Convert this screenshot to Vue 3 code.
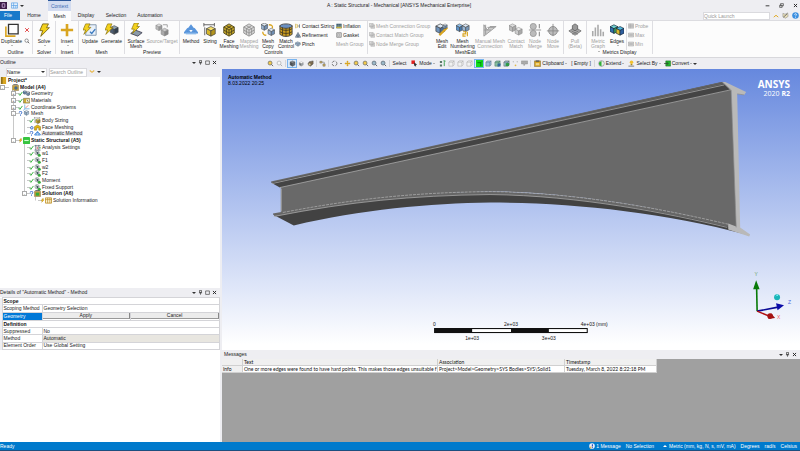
<template>
  <div class="app">
    <header class="titlebar">
      <div class="quick">
        <Icon name="logo" :size="7" />
        <button class="plain" aria-label="Layout"><Icon name="layout" :size="7" /></button>
        <button class="plain caret-btn" aria-label="Customize"><i class="caret"></i></button>
      </div>
      <div class="context">Context</div>
      <h1 class="title">A : Static Structural - Mechanical [ANSYS Mechanical Enterprise]</h1>
      <div class="window-buttons">
        <button class="plain" aria-label="Minimize"><Icon name="min" :size="5" /></button>
        <button class="plain" aria-label="Restore"><Icon name="restore" :size="5" /></button>
        <button class="plain" aria-label="Close"><Icon name="close" :size="5" /></button>
      </div>
    </header>

    <nav class="tabs">
      <button
        v-for="tab in tabs"
        :key="tab"
        class="tab"
        :class="['tab-' + tab.toLowerCase(), { active: tab === activeTab }]"
        @click="activeTab = tab"
      >{{ tab }}</button>
      <div class="launch">
        <input type="text" placeholder="Quick Launch" aria-label="Quick Launch">
        <button class="plain" aria-label="Collapse"><Icon name="chevUp" :size="6" /></button>
        <button class="plain" aria-label="Options"><Icon name="wrench" :size="7" /></button>
        <button class="plain" aria-label="Help"><Icon name="help" :size="7" /></button>
      </div>
    </nav>

    <section class="ribbon">
      <div v-for="group in groups" :key="group.id" class="group" :class="'group-' + group.id">
        <div class="group-items">
          <template v-for="item in group.items" :key="item.key">
            <div v-if="item.small" class="stack" :class="item.cls">
              <button v-for="s in item.small" :key="s.icon + s.text" class="small" :class="{ off: s.off }" :aria-label="s.text || s.icon">
                <Icon v-if="s.icon" :name="s.icon" :size="6" />
                <span v-if="s.text">{{ s.text }}</span>
              </button>
            </div>
            <button v-else class="big" :class="[item.cls, { off: item.off }]">
              <Icon :name="item.icon" :size="14" />
              <span>{{ item.text }}<i v-if="item.inlineCaret" class="caret tiny"></i></span>
              <i v-if="item.caret" class="caret tiny"></i>
            </button>
          </template>
        </div>
        <div class="group-label">{{ group.label }}</div>
      </div>
    </section>

    <main class="work">
      <aside class="left">
        <div class="panel-head">
          <span>Outline</span><i class="dots"></i><PanelButtons />
        </div>
        <div class="filter">
          <select aria-label="Filter by"><option>Name</option></select>
          <i class="caret select-caret"></i>
          <input type="text" placeholder="Search Outline" aria-label="Search Outline">
          <button class="plain" aria-label="Expand"><Icon name="chevDown" :size="6" /></button>
          <i class="caret"></i>
        </div>
        <div class="outline">
          <ul class="tree">
            <li v-for="node in tree" :key="node.text" :class="{ bold: node.bold }">
              <template v-if="node.depth">
                <i v-for="n in node.depth - 1" :key="n" class="indent" :class="{ line: node.open === n }"></i>
                <i class="knot" :class="{ line: node.depth > 1, last: node.last }">
                  <b v-if="node.box">{{ node.box }}</b>
                </i>
                <i class="state"><Icon v-if="node.state" :name="node.state" :size="5" /></i>
              </template>
              <Icon :name="node.icon" :size="7" />
              <span class="node-text" :class="{ selected: node.selected }">{{ node.text }}</span>
            </li>
          </ul>
        </div>
        <div class="panel-head">
          <span>Details of "Automatic Method" - Method</span><i class="dots"></i><PanelButtons />
        </div>
        <div class="details">
          <table>
            <colgroup><col class="c-gutter"><col class="c-name"><col><col></colgroup>
            <tbody>
              <tr class="section"><td class="gutter"></td><th colspan="3">Scope</th></tr>
              <tr><td class="gutter"></td><th>Scoping Method</th><td colspan="2">Geometry Selection</td></tr>
              <tr class="picked">
                <td class="gutter"></td><th>Geometry</th>
                <td><button>Apply</button></td><td><button>Cancel</button></td>
              </tr>
              <tr class="section"><td class="gutter"></td><th colspan="3">Definition</th></tr>
              <tr><td class="gutter"></td><th>Suppressed</th><td colspan="2">No</td></tr>
              <tr class="shade"><td class="gutter"></td><th>Method</th><td colspan="2">Automatic</td></tr>
              <tr><td class="gutter"></td><th>Element Order</th><td colspan="2">Use Global Setting</td></tr>
            </tbody>
          </table>
        </div>
      </aside>

      <div class="right">
        <div class="toolbar">
          <i class="grip"></i>
          <template v-for="(t, i) in tools" :key="i">
            <i v-if="t === '|'" class="sep"></i>
            <i v-else-if="t === 'v'" class="caret light"></i>
            <button v-else class="tool" :class="[t.cls, { on: t.on }]" :aria-label="t.text || t.icon">
              <Icon v-if="t.icon" :name="t.icon" :size="7" />
              <span v-if="t.text">{{ t.text }}</span>
              <i v-if="t.caret" class="caret tiny"></i>
            </button>
          </template>
          <i class="caret"></i>
        </div>

        <div class="viewport">
          <div class="caption">
            <strong>Automatic Method</strong>
            <span>8.03.2022 20:25</span>
          </div>
          <div class="brand"><strong>ANSYS</strong><span>2020 <b>R2</b></span></div>
          <svg class="scene" viewBox="222 68 578 282">
            <!-- web plate -->
            <path fill="#696969" d="M280 185L732 88L739 228C690 212 580 192 500 191C430 191 350 201 280 212Z" />
            <!-- upper flange -->
            <path fill="#444" d="M270 182L723 81L732 89L279 187Z" />
            <path fill="#686868" d="M270 181L722 81L725 83L272 183Z" />
            <path class="edge" d="M271 183L725 84M279 187L731 89" />
            <path stroke="#555" stroke-width=".8" fill="none" d="M272 182L724 82" />
            <path class="edge" d="M280.500 188V211" />
            <!-- lower flange -->
            <path fill="#424242" d="M272 214C350 200 410 193 490 192C580 193 670 211 730 224L747 234C660 211 570 202 490 202C430 203 360 209 293 225Z" />
            <path fill="#666" d="M272 213C350 199 410 192 490 191C580 192 670 209 732 224L736 228C670 212 580 195 490 194C410 195 350 201 274 216Z" />
            <path class="edge" d="M273 216C350 201 410 195 490 194C580 195 670 213 728 227" />
            <path class="edge" stroke-dasharray="3 1" d="M282 212C350 199 410 192 490 191C580 192 670 210 730 224" />
            <!-- end section -->
            <path fill="#b9b9b9" d="M723 81L726 81L747 91L745 94L738 93L741 227L751 234L750 236L729 229V223L737 226L732 90L729 87Z" />
            <path fill="none" stroke="#8b8b8b" stroke-width=".7" d="M723 81L732 89L737 227M738 93L745 94" />

            <g class="ruler">
              <rect x="434.500" y="328.500" width="153" height="4" fill="#fff" stroke="#000" />
              <path d="M434 328h38v5h-38zM511 328h38v5h-38z" />
              <text x="434" y="326" text-anchor="middle">0</text>
              <text x="511" y="326" text-anchor="middle">2e+03</text>
              <text x="581" y="326">4e+03 (mm)</text>
              <text x="472" y="340" text-anchor="middle">1e+03</text>
              <text x="549" y="340" text-anchor="middle">3e+03</text>
            </g>

            <g class="triad">
              <circle cx="778" cy="297" r="3" fill="#1ab5b8" />
              <path d="M777 296a2 2 0 0 1 2-1" stroke="#8ff" fill="none" />
              <path d="M758 311L757.500 287" stroke="#087a08" stroke-width="1.600" />
              <path d="M757 280L760.500 289H754Z" fill="#087a08" />
              <path d="M758 311L779 307" stroke="#0a0a96" stroke-width="1.600" />
              <path d="M785 305L777 303L778.500 310Z" fill="#0a0aa8" />
              <path d="M758 311L770 316" stroke="#b01010" stroke-width="1.600" />
              <path d="M776 318L769 319L772 313Z" fill="#a01010" /><circle cx="771" cy="316" r="2.800" fill="#a51212" />
              <text x="757" y="276" fill="#6aa56a" text-anchor="middle">Y</text>
              <text x="789" y="304" fill="#4a6ae0">Z</text>
              <text x="778" y="319" fill="#f06060">X</text>
            </g>
          </svg>
        </div>

        <div class="messages">
          <div class="panel-head">
            <span>Messages</span><i class="dots"></i><PanelButtons short />
          </div>
          <table>
            <thead>
              <tr><th class="c-kind"></th><th class="c-text">Text</th><th class="c-assoc">Association</th><th class="c-time">Timestamp</th></tr>
            </thead>
            <tbody>
              <tr>
                <td class="kind">Info</td>
                <td>One or more edges were found to have hard points. This makes those edges unsuitable f</td>
                <td>Project&gt;Model&gt;Geometry&gt;SYS Bodies&gt;SYS\Solid1</td>
                <td>Tuesday, March 8, 2022 8:22:18 PM</td>
              </tr>
            </tbody>
          </table>
        </div>
      </div>
    </main>

    <footer class="status">
      <span class="ready">Ready</span>
      <span class="msg"><Icon name="bubble" :size="6" />1 Message</span>
      <span>No Selection</span>
      <span class="units"><i class="caret up"></i>Metric (mm, kg, N, s, mV, mA)</span>
      <span>Degrees</span>
      <span>rad/s</span>
      <span>Celsius</span>
    </footer>
  </div>
</template>

<script setup>
import { ref, h } from 'vue'

// small shapes shared by several icons, drawn on a 16x16 grid
const bolt = (x = 0, y = 0, c = '#f4d21c') =>
  `<path transform="translate(${x} ${y})" d="M5 0h5L8 4h3L3 12l2-5H2z" fill="${c}" stroke="#8a7410" stroke-width=".8"/>`
const cube = (x, y, s, a, b, c, st = '#444') =>
  `<g transform="translate(${x} ${y}) scale(${s})" stroke="${st}" stroke-width=".8"><path d="M5 0l5 2.500-5 2.500-5-2.500z" fill="${a}"/><path d="M0 2.500l5 2.500v6l-5-2.500z" fill="${b}"/><path d="M10 2.500l-5 2.500v6l5-2.500z" fill="${c}"/></g>`
const lens = (c, fill) =>
  `<circle cx="7" cy="7" r="4.500" fill="${fill}" stroke="${c}" stroke-width="1.600"/><path d="M10 10l4 4" stroke="${c}" stroke-width="2.200"/>`
const hexMesh = (fill, st) =>
  `<path d="M8 1l6 3.500v7L8 15l-6-3.500v-7z" fill="${fill}" stroke="${st}"/><path d="M2 4.500l6 3.500 6-3.500M8 8v7M2 8l6 3.500L14 8M5 3l6 3.500v7M11 3L5 6.500v7" stroke="${st}" fill="none"/>`
const box = (st, fill = '#f2f2f2') =>
  `<path d="M2 5l3-3h9v9l-3 3H2z" fill="${fill}" stroke="${st}"/><path d="M2 5h9v9M11 5l3-3" fill="none" stroke="${st}"/>`
const load = `<circle cx="7" cy="6" r="5" fill="#d8e4d8" stroke="#667"/><path d="M5 3l6 3-4 5z" fill="#3a4a5a"/><circle cx="12" cy="12" r="3.500" fill="#37a93c"/>`

const icons = {
  logo: '<rect width="16" height="16" fill="#3b1b46"/><path d="M5 4h6v8H5z" fill="none" stroke="#c9a9d8" stroke-width="2"/>',
  layout: '<path d="M1 2h14v12H1zM1 8h14M6 2v12M11 8v6" fill="#e5f0fc" stroke="#5aa0e6" stroke-width="1.600"/>',
  min: '<path d="M2 9h12" stroke="#333" stroke-width="3"/>',
  restore: '<path d="M5 2h9v7h-9zM2 7h8v7H2z" fill="#eee" stroke="#333" stroke-width="2"/>',
  close: '<path d="M3 3l10 10M13 3L3 13" stroke="#222" stroke-width="3"/>',
  chevUp: '<path d="M2 11l6-5 6 5" stroke="#e0a81c" stroke-width="2.500" fill="none"/>',
  chevDown: '<path d="M2 4l6 5 6-5" stroke="#e8b84c" stroke-width="3" fill="none"/>',
  wrench: '<path d="M2 3l5 2 6-3 1 8-6 4-6-3z" fill="#e9dfb8" stroke="#777"/><path d="M3 12l9-8" stroke="#666" stroke-width="2"/>',
  help: '<circle cx="8" cy="8" r="7.500" fill="#3b8fe0"/><path d="M6 6q0-2 2-2t2 2-2 3M8 11v2" stroke="#fff" stroke-width="1.800" fill="none"/>',
  pin: '<path d="M5 1h6v7H5zM3 9h10M8 9v6" fill="none" stroke="#333" stroke-width="2.200"/>',
  square: '<path d="M2 3h12v11H2z" fill="none" stroke="#333" stroke-width="2"/>',
  duplicate: '<path d="M1 4v11h11" fill="none" stroke="#d9a520" stroke-width="1.800"/><path d="M4 1.500h11v11H4z" fill="#fdfdfd" stroke="#333" stroke-width="1.500"/>',
  x: '<path d="M3 3l10 10M13 3L3 13" stroke="#e04040" stroke-width="2.500"/>',
  mag: lens('#555', '#fff'),
  solve: '<g transform="translate(1 1) scale(1.100)"><path d="M5 0h6L9 4h3L3 13l2-6H2z" fill="#f4d21c" stroke="#776412" stroke-width=".9"/></g>',
  insert: '<path d="M6.500 1h3v5.500H15v3H9.500V15h-3V9.500H1v-3h5.500z" fill="#d9a520"/>',
  update: '<path d="M4 2h11v12H3z" fill="#e9f1fa" stroke="#7890a8"/><path d="M8 10l2 2 4-5" stroke="#3a7ac0" stroke-width="1.500" fill="none"/>' + bolt(-2, 1),
  generate: cube(6, 3, 0.9, '#8fa5b8', '#4c5c70', '#31404f') + bolt(-2, 1),
  surface: '<path d="M2 12l5-4 8 3-5 4z" fill="#8a9aa8" stroke="#445"/>' + bolt(1, 0),
  source: cube(1, 1, 0.7, '#ddd', '#bbb', '#999', '#888') + cube(7, 6, 0.8, '#ccc', '#aaa', '#888', '#888') + '<path d="M9 2h5v3" stroke="#999" fill="none"/>',
  method: '<path d="M1 11l3-4 3 4zM5 7l3-4 3 4zM9 11l3-4 3 4z" fill="#4f8fd8" stroke="#5a96dc" stroke-width="2"/><path d="M2 12h12" stroke="#8ab8ea" stroke-width="2"/>',
  sizing: cube(4, 4, 1, '#f7e06a', '#d8b82c', '#b3941c') + '<path d="M1 2h12M1 0v4M13 0v4M2 5v9" stroke="#555" fill="none"/>',
  face: hexMesh('#c8a92a', '#4c431a'),
  mapped: hexMesh('#d8d8d8', '#909090'),
  copy: cube(0, 0, 0.75, '#dfe9f4', '#9cb6d3', '#6f8fb4') + cube(8, 6, 0.75, '#dfe9f4', '#9cb6d3', '#6f8fb4') + '<path d="M9 2q5 0 4 4M2 10q0 4 4 4" stroke="#d9a520" stroke-width="1.500" fill="none"/>',
  match: '<path d="M1 3v10q7 5 14 0V3z" fill="#c99a1c" stroke="#4a4a4a"/><ellipse cx="8" cy="3.500" rx="7" ry="2.500" fill="#6a8fc0" stroke="#444"/><path d="M1 6.500q7 4 14 0M1 10q7 4 14 0M4 5v9M8 6v9M12 5v9" stroke="#4a4020" fill="none"/>',
  contact: '<path d="M2 2v12M5 3q6 5 0 10" stroke="#c8a020" stroke-width="2" fill="none"/><path d="M13 2q-7 6 0 12z" fill="#6c7c90"/>',
  refinement: '<path d="M8 1l7 13H1zM4.500 8h7L8 14z" fill="#9fb4cc" stroke="#345" stroke-width="1.300"/>',
  pinch: '<path d="M1 5l6-3 7 3v5l-6 4-7-4z" fill="#9fb4cc" stroke="#456"/><path d="M1 5l7 3 6-3M8 8v6" stroke="#456" fill="none"/>',
  inflation: '<path d="M1 2h14v12H1z" fill="#33506c"/><path d="M1 10h14v4H1z" fill="#c8b030"/><path d="M1 6h14M1 9h14M6 2v12M11 2v12" stroke="#b9d0b0" stroke-width=".8"/>',
  gasket: '<path d="M2 2h12v12H2z" fill="#eee" stroke="#555" stroke-width="1.600"/><path d="M5 5h5v6H5z" fill="none" stroke="#555"/>',
  group: '<path d="M1 1h10v9H1zM5 5h10v9H5z" fill="#e2e2e2" stroke="#999" stroke-width="1.300"/><path d="M7 8h6M7 11h6" stroke="#999"/>',
  edit: cube(1, 1, 1, '#dce8f4', '#6f93bb', '#4a6b92') + '<path d="M5 14l9-9" stroke="#d9a520" stroke-width="2.500"/>' + cube(9, 1, 0.5, '#dce8f4', '#8facc9', '#6688aa'),
  numbering: cube(0, 1, 0.8, '#8fc1ef', '#5b91c6', '#4777a8') + cube(7, 1, 0.8, '#dce8f4', '#9ab7d4', '#7797b7') + '<path d="M8 10h3v2.500H8V15h3M13 10v5" stroke="#d9a520" stroke-width="1.300" fill="none"/>',
  manual: '<path d="M1 2v13L15 4H8L5 8z" fill="#ccc" stroke="#999"/><path d="M3 2v11M1 8h8M5 5h8" stroke="#999"/>',
  cmatch: cube(0, 1, 0.8, '#ddd', '#bbb', '#aaa', '#888') + cube(7, 5, 0.8, '#eee', '#ccc', '#aaa', '#888'),
  merge: '<circle cx="6" cy="4" r="3.500" fill="#bbb" stroke="#999"/><circle cx="6" cy="12" r="3.500" fill="#bbb" stroke="#999"/><path d="M1 8h14M13 1v5M13 15v-5" stroke="#999" stroke-width="1.400"/>',
  move: '<circle cx="8" cy="9" r="5" fill="#bdbdbd" stroke="#888"/><path d="M8 1v14M1 9h14" stroke="#888"/>',
  pull: '<path d="M8 5l7 4-7 5-7-5z" fill="#aaa" stroke="#777"/><path d="M5 7V3l3-2 3 2v4l-3 2z" fill="#999" stroke="#666"/><path d="M4 9l7 4M12 9l-7 4" stroke="#777"/>',
  metric: '<path d="M2 15V9M5 15V5M8 15V2M11 15V7M14 15V10" stroke="#aaa" stroke-width="1.800"/>',
  edges: cube(0, 2, 0.9, '#6fd0d0', '#2f6fae', '#3fae5f', '#123') + cube(7, 4, 0.9, '#4fb8e0', '#d8b82c', '#2f5f9e', '#123'),
  probe: '<path d="M1 2h14v12H1z" fill="#ccc" stroke="#999"/><path d="M1 6h14M1 10h14M6 2v12" stroke="#999"/>',
  max: '<path d="M1 3h14v10H1z" fill="#ddd" stroke="#999" stroke-width="1.500"/><path d="M3 8h10" stroke="#888" stroke-width="2"/>',
  check: '<path d="M2 9l4 5 8-11" stroke="#2fae36" stroke-width="3" fill="none"/>',
  query: '<path d="M4 5q0-4 4-4t4 4-4 5M8 12v3" stroke="#2c62c8" stroke-width="3" fill="none"/>',
  flash: bolt(2, 2, '#f4b81c'),
  ring: '<circle cx="9" cy="9" r="4" fill="none" stroke="#2c62c8" stroke-width="3"/>',
  project: '<path d="M2 0h12v16H2z" fill="#d8a520"/><path d="M2 0h4v16H2z" fill="#8f6f18"/>',
  model: '<path d="M1 3h14v12H1z" fill="#cda432" stroke="#765"/><circle cx="9" cy="9" r="4" fill="#456a90"/><path d="M3 1h10" stroke="#666" stroke-width="2"/>',
  geometry: cube(0, 1, 0.8, '#a8c4e4', '#4f7fb0', '#6c96c0') + cube(7, 3, 0.9, '#dfe9f4', '#8ba9c8', '#7390b0'),
  materials: '<path d="M1 3h14v11H1z" fill="#c9a834" stroke="#554"/><path d="M7 5h7v7H7z" fill="#f6efd0"/><path d="M9 6l3 5" stroke="#444" stroke-width="1.500"/>',
  coords: '<path d="M4 1v10h11M4 11l-3 4" stroke="#57a0d8" fill="none" stroke-width="1.600"/><path d="M6 9l6-6" stroke="#e06a6a" stroke-width="1.800"/>',
  mesh: cube(3, 1, 1, '#dbe7f3', '#8aa8c6', '#a8c0d8', '#456'),
  faceMesh: '<path d="M1 14V6l7-4 7 4v8h-4V9H6v5z" fill="#e2b414" stroke="#7a6410"/>',
  env: '<rect width="16" height="16" rx="1" fill="#37c43f"/><path d="M3 8h10" stroke="#d6ffd8" stroke-width="2.500"/>',
  settings: '<path d="M1 4h14M1 14h14M4 2v12M11 2v12" stroke="#456" stroke-width="1.500"/><path d="M6 6h3v6H6z" fill="#e08a8a"/><path d="M12 7h3v3h-3z" fill="#4ab04e"/>',
  load,
  solution: '<path d="M1 3h14v12H1z" fill="#c79c30" stroke="#765"/><path d="M4 6h8v7H4z" fill="#37a93c"/><path d="M3 1h10" stroke="#555" stroke-width="2"/>',
  info: '<path d="M1 2h14v12H1z" fill="#fff6d8" stroke="#b98a1c" stroke-width="1.800"/><path d="M1 6h14M6 2v12M11 2v12" stroke="#b98a1c" stroke-width="1.500"/>',
  zoomY: lens('#66686c', '#f2c94a'),
  zoomG: lens('#a8aaae', '#f6f6f6'),
  zoomB: lens('#5a6470', '#9ab8c8'),
  shaded: cube(2.5, 2, 1.1, '#8a8f94', '#4a5056', '#666c72'),
  flat: cube(3, 4, 0.9, '#fff', '#6c7278', '#9ca2a8', '#888'),
  shapes: '<path d="M2 9l3-5 9-2v7l-6 5z" fill="#7c6a50" stroke="#444"/><circle cx="6" cy="10" r="3" fill="#dcc890" stroke="#444"/>',
  nodes: '<path d="M2 3h5v4H2zM9 9h5v5H9z" fill="#d9b860" stroke="#555"/><path d="M7 5h5v4" stroke="#555" fill="none"/>',
  rotate: '<circle cx="8" cy="8" r="5.500" fill="none" stroke="#555" stroke-width="1.600" stroke-dasharray="6 2.600"/>',
  pan: '<path d="M8 1l3 4H9v2h2V5l4 3-4 3V9H9v2h2l-3 4-3-4h2V9H5v2L1 8l4-3v2h2V5H5z" fill="#d9a520"/>',
  cursor: '<path d="M1 1h8v8H1z" fill="#e02020"/><path d="M7 5l7 6-3 .5 1 3-2 .5-1-3-2 2z" fill="#333"/>',
  filter: '<path d="M2 2h5v5H2zM2 10h5v5H2z" fill="#5a7868"/><path d="M10 2h4l-2 4v8" stroke="#2f9a45" stroke-width="2" fill="none"/>',
  boxG: box('#9a9a9a'),
  boxOn: '<rect width="16" height="16" fill="#10dc1c"/><path d="M3 6h8v8M11 6l3-3" fill="none" stroke="#065f0a" stroke-width="1.500"/>',
  boxB: box('#556a80', '#9fc0dc'),
  boxN: box('#3f6a58', '#8ac0a0') + '<path d="M8 8h7v7H8z" fill="#346898"/>',
  boxM: box('#444', '#9cc4d4') + '<path d="M6 7h8v7H6z" fill="#2f9a45"/>',
  tri: '<circle cx="3" cy="4" r="1.500" fill="#bbb"/><circle cx="12" cy="4" r="1.500" fill="#bbb"/><circle cx="8" cy="12" r="2" fill="#e0b94a"/>',
  callout: '<path d="M1 2h14v7H9l-2 4-1-4H1z" fill="#aaa" stroke="#888"/>',
  clip: '<path d="M1 2h14v13H1z" fill="#d9a520" stroke="#6a5a2a"/><path d="M4 1h8v3H4z" fill="#555"/><path d="M4 7h8v5H4z" fill="#efd58a"/>',
  extend: '<circle cx="8" cy="8" r="6.500" fill="#e8efe8" stroke="#556"/><path d="M8 2v12a6 6 0 0 1-5-9z" fill="#2fae36"/>',
  bulb: '<circle cx="8" cy="5" r="4" fill="#f2c12e"/><path d="M6 9h4v3H6z" fill="#a88820"/><path d="M1 14h13" stroke="#555" stroke-width="1.600"/>',
  convert: '<path d="M4 2h11v12H4z" fill="#23b42c" stroke="#155c18"/><path d="M0 8h8M6 5l4 3-4 3" stroke="#333" stroke-width="1.500" fill="none"/>',
  bubble: '<circle cx="8" cy="8" r="7.500" fill="#e9eefc"/><path d="M1 13l5-6v8z" fill="#e8b84c"/><path d="M9 3v6M9 11v2" stroke="#1a3fae" stroke-width="2.800"/>'
}

const Icon = (props) =>
  h('svg', {
    class: 'icon',
    viewBox: '0 0 16 16',
    width: props.size,
    height: props.size,
    'aria-hidden': true,
    innerHTML: icons[props.name]
  })
Icon.props = ['name', 'size']

const PanelButtons = (props) =>
  h('span', { class: 'panel-buttons' }, [
    h('i', { class: 'caret' }),
    h(Icon, { name: 'pin', size: 5 }),
    props.short ? null : h(Icon, { name: 'square', size: 5 }),
    h(Icon, { name: 'close', size: 5 })
  ])
PanelButtons.props = { short: Boolean }

const tabs = ['File', 'Home', 'Mesh', 'Display', 'Selection', 'Automation']
const activeTab = ref('Mesh')

const groups = [
  {
    id: 'outline', label: 'Outline', items: [
      { key: 'dup', icon: 'duplicate', text: 'Duplicate', caret: true, cls: 'w23' },
      { key: 'dupx', cls: 'tall', small: [{ icon: 'x' }, { icon: 'mag' }] }
    ]
  },
  { id: 'solver', label: 'Solver', items: [{ key: 'solve', icon: 'solve', text: 'Solve', caret: true, cls: 'w20' }] },
  { id: 'insert', label: 'Insert', items: [{ key: 'insert', icon: 'insert', text: 'Insert', caret: true, cls: 'w20' }] },
  {
    id: 'mesh', label: 'Mesh', items: [
      { key: 'update', icon: 'update', text: 'Update', cls: 'w20' },
      { key: 'gen', icon: 'generate', text: 'Generate', cls: 'w23' }
    ]
  },
  {
    id: 'preview', label: 'Preview', items: [
      { key: 'surf', icon: 'surface', text: 'Surface Mesh', cls: 'w20' },
      { key: 'src', icon: 'source', text: 'Source/Target', off: true, cls: 'w32' }
    ]
  },
  {
    id: 'controls', label: 'Controls', items: [
      { key: 'method', icon: 'method', text: 'Method', cls: 'w20' },
      { key: 'sizing', icon: 'sizing', text: 'Sizing', cls: 'w18' },
      { key: 'face', icon: 'face', text: 'Face Meshing', cls: 'w20' },
      { key: 'mapped', icon: 'mapped', text: 'Mapped Meshing', off: true, cls: 'w20' },
      { key: 'copy', icon: 'copy', text: 'Mesh Copy', cls: 'w18' },
      { key: 'match', icon: 'match', text: 'Match Control', cls: 'w18' },
      {
        key: 'c1', cls: 'col41', small: [
          { icon: 'contact', text: 'Contact Sizing' },
          { icon: 'refinement', text: 'Refinement' },
          { icon: 'pinch', text: 'Pinch' }
        ]
      },
      {
        key: 'c2', cls: 'col30', small: [
          { icon: 'inflation', text: 'Inflation' },
          { icon: 'gasket', text: 'Gasket' },
          { text: 'Mesh Group', off: true }
        ]
      }
    ]
  },
  {
    id: 'edit', label: 'MeshEdit', items: [
      {
        key: 'e1', cls: 'col64', small: [
          { icon: 'group', text: 'Mesh Connection Group', off: true },
          { icon: 'group', text: 'Contact Match Group', off: true },
          { icon: 'group', text: 'Node Merge Group', off: true }
        ]
      },
      { key: 'medit', icon: 'edit', text: 'Mesh Edit', cls: 'w18' },
      { key: 'num', icon: 'numbering', text: 'Mesh Numbering', cls: 'w23' },
      { key: 'man', icon: 'manual', text: 'Manual Mesh Connection', off: true, cls: 'w32 two-words' },
      { key: 'cm', icon: 'cmatch', text: 'Contact Match', off: true, cls: 'w20' },
      { key: 'nm', icon: 'merge', text: 'Node Merge', off: true, cls: 'w18' },
      { key: 'nv', icon: 'move', text: 'Node Move', off: true, cls: 'w18' }
    ]
  },
  { id: 'pull', label: '', items: [{ key: 'pull', icon: 'pull', text: 'Pull (Beta)', off: true, cls: 'w20' }] },
  {
    id: 'metrics', label: 'Metrics Display', items: [
      { key: 'metric', icon: 'metric', text: 'Metric Graph', inlineCaret: true, off: true, cls: 'w20' },
      { key: 'edges', icon: 'edges', text: 'Edges', caret: true, cls: 'w18' },
      {
        key: 'm1', cls: 'col23', small: [
          { icon: 'probe', text: 'Probe', off: true },
          { icon: 'max', text: 'Max', off: true },
          { icon: 'max', text: 'Min', off: true }
        ]
      }
    ]
  }
]

const tree = [
  { depth: 0, icon: 'project', text: 'Project*', bold: true },
  { depth: 1, icon: 'model', text: 'Model (A4)', bold: true, box: '-' },
  { depth: 2, icon: 'geometry', text: 'Geometry', box: '+', state: 'check' },
  { depth: 2, icon: 'materials', text: 'Materials', box: '+', state: 'check' },
  { depth: 2, icon: 'coords', text: 'Coordinate Systems', box: '+', state: 'check' },
  { depth: 2, icon: 'mesh', text: 'Mesh', box: '-', state: 'query' },
  { depth: 3, icon: 'sizing', text: 'Body Sizing', state: 'check', open: 2 },
  { depth: 3, icon: 'faceMesh', text: 'Face Meshing', state: 'ring', open: 2 },
  { depth: 3, icon: 'method', text: 'Automatic Method', state: 'query', open: 2, last: true, selected: true },
  { depth: 2, icon: 'env', text: 'Static Structural (A5)', bold: true, box: '-', state: 'flash', last: true },
  { depth: 3, icon: 'settings', text: 'Analysis Settings', state: 'check' },
  { depth: 3, icon: 'load', text: 'w1', state: 'check' },
  { depth: 3, icon: 'load', text: 'F1', state: 'check' },
  { depth: 3, icon: 'load', text: 'w2', state: 'check' },
  { depth: 3, icon: 'load', text: 'F2', state: 'check' },
  { depth: 3, icon: 'load', text: 'Moment', state: 'check' },
  { depth: 3, icon: 'load', text: 'Fixed Support', state: 'check' },
  { depth: 3, icon: 'solution', text: 'Solution (A6)', bold: true, box: '-', state: 'query', last: true },
  { depth: 4, icon: 'info', text: 'Solution Information', state: 'flash', last: true }
]

const tools = [
  { icon: 'zoomY' }, { icon: 'zoomG' }, '|',
  { icon: 'shaded', on: true }, { icon: 'flat' }, { icon: 'shapes' }, '|',
  { icon: 'nodes' }, '|',
  { icon: 'rotate' }, 'v', { icon: 'pan' }, { icon: 'zoomY' }, { icon: 'zoomY' }, { icon: 'zoomB' }, { icon: 'zoomB' }, '|',
  { text: 'Select', cls: 't17' },
  { icon: 'cursor', text: 'Mode', caret: true, cls: 't30' },
  { icon: 'filter' }, { icon: 'boxG' }, { icon: 'boxG' }, { icon: 'boxG' }, { icon: 'boxOn', on: true },
  { icon: 'boxB' }, { icon: 'boxN' }, { icon: 'boxM' }, { icon: 'tri' }, { icon: 'callout' }, '|',
  { icon: 'clip', text: 'Clipboard', caret: true, cls: 't37' },
  { text: '[ Empty ]', cls: 't24' }, '|',
  { icon: 'extend', text: 'Extend', caret: true, cls: 't30' },
  { icon: 'bulb', text: 'Select By', caret: true, cls: 't37' },
  { icon: 'convert', text: 'Convert', caret: true, cls: 't30' }
]
</script>

<style>
body {
  margin: 0;
}

.icon {
  display: block;
  flex: none;
}

.caret {
  flex: none;
  width: 0;
  height: 0;
  border-style: solid;
  border-color: #333 transparent transparent;
  border-width: 2px 2px 0;
}

.panel-buttons {
  display: flex;
  align-items: center;
  gap: 2px;
}
</style>

<style scoped>
.app {
  display: flex;
  flex-direction: column;
  height: 100vh;
  overflow: hidden;
  background: #eeeef2;
  color: #222;
  font-family: "Liberation Sans", Arial, sans-serif;
  font-size: 5px;
  line-height: 5px;
  white-space: nowrap;
}

button,
input,
select {
  font: inherit;
  color: inherit;
  padding: 0;
  margin: 0;
  border: 0;
  background: none;
  box-sizing: border-box;
}

.plain {
  display: flex;
  align-items: center;
}

.caret.tiny {
  border-width: 1px 1px 0;
  border-top-color: #777;
}

.caret.light {
  border-width: 1px 1px 0;
  margin: 0 1px;
}

/* title bar */
.titlebar {
  display: grid;
  grid-template-columns: 48px 23px 1fr auto;
  height: 11px;
  align-items: center;
}

.quick {
  display: flex;
  align-items: center;
  gap: 4px;
}

.caret-btn {
  margin-left: -2px;
}

.context {
  align-self: stretch;
  box-sizing: border-box;
  border-top: 1px solid #2b579a;
  background: #d3dcf0;
  color: #3b6cb4;
  line-height: 10px;
  text-align: center;
}

.title {
  margin: 0;
  padding-right: 38px;
  font-size: 5px;
  font-weight: normal;
  text-align: center;
}

.window-buttons {
  display: flex;
  gap: 9px;
  padding-right: 2px;
}

/* tabs */
.tabs {
  display: flex;
  height: 9px;
  border-bottom: 1px solid #dcdce0;
}

.tab {
  line-height: 9px;
  width: 30px;
}

.tab-file {
  width: 20px;
  background: #1979ca;
  color: #fff;
  padding-right: 4px;
}

.tab-home {
  width: 28px;
}

.tab-mesh {
  width: 23px;
}

.tab-automation {
  width: 38px;
}

.tab.active {
  background: #fcfcfc;
  height: 10px;
}

.launch {
  display: flex;
  gap: 3px;
  align-items: center;
  margin-left: auto;
  padding-right: 1px;
}

.launch input {
  width: 67px;
  height: 8px;
  border: 1px solid #dadade;
  background: #fff;
}

input::placeholder {
  color: #999;
  opacity: 1;
}

/* ribbon */
.ribbon {
  display: flex;
  height: 36px;
  background: #fcfcfc;
  border-bottom: 1px solid #d8d8dc;
}

.group {
  box-sizing: border-box;
  display: flex;
  flex-direction: column;
  padding: 2px 1px 0;
  margin-bottom: 3px;
  border-right: 1px solid #dedee2;
}

.group-outline {
  padding-left: 0;
}

.group-items {
  display: flex;
  height: 27px;
}

.group-label {
  text-align: center;
}

.big {
  display: flex;
  flex-direction: column;
  align-items: center;
  height: 27px;
  line-height: 5px;
}

.big span {
  width: min-content;
  margin-top: 2px;
  white-space: normal;
}

.big.two-words span {
  width: auto;
}

.big .caret {
  display: inline-block;
  margin: 1px 0 1px 1px;
}

.off {
  color: #a0a0a0;
}

.w18 {
  width: 18px;
}

.w20 {
  width: 20px;
}

.w23 {
  width: 23px;
}

.w32 {
  width: 32px;
}

.stack {
  display: flex;
  flex-direction: column;
  gap: 3px;
}

.tall {
  padding: 4px 1px 0;
  gap: 5px;
}

.small {
  display: flex;
  align-items: center;
  gap: 1px;
  height: 6px;
}

.col41 {
  width: 41px;
}

.col30 {
  width: 30px;
}

.col64 {
  width: 64px;
}

.col23 {
  width: 23px;
  padding-left: 1px;
  border-left: 1px solid #dedee2;
}

/* work area */
.work {
  flex: 1;
  min-height: 0;
  display: grid;
  grid-template-columns: 222px 1fr;
}

.left {
  display: flex;
  flex-direction: column;
  min-height: 0;
  padding-right: 2px;
}

.panel-head {
  display: flex;
  align-items: center;
  gap: 2px;
  height: 9px;
  padding-right: 3px;
}

.dots {
  flex: 1;
  height: 4px;
  margin-right: 3px;
  background: radial-gradient(circle, #c4c4cc 35%, transparent 40%) 0 0 / 2px 2px;
}

.filter {
  display: flex;
  align-items: center;
  gap: 2px;
  height: 10px;
  padding-left: 6px;
}

.filter select {
  appearance: none;
  width: 41px;
  height: 9px;
  background: #fff;
  border: 1px solid #dadade;
}

.select-caret {
  margin-left: -8px;
  margin-right: 2px;
}

.filter input {
  width: 38px;
  height: 9px;
  background: #fff;
  border: 1px solid #dadade;
}

.outline {
  flex: 1;
  min-height: 0;
  overflow: hidden;
  background: #fff;
}

.tree {
  display: grid;
  grid-auto-rows: 1fr;
  height: 127px;
  margin: 0;
  padding: 0;
  list-style: none;
}

.tree li {
  display: flex;
  align-items: center;
  min-height: 0;
}

.tree .bold {
  font-weight: bold;
  color: #111;
}

.indent {
  flex: none;
  width: 11px;
  height: 100%;
}

.indent.line,
.knot.line {
  background: linear-gradient(#c8c8c8, #c8c8c8) 2px 0 / 1px 100% no-repeat;
}

.knot.line.last {
  background-size: 1px 50%;
}

.knot {
  flex: none;
  display: flex;
  align-items: center;
  width: 5px;
  height: 100%;
}

.knot b {
  box-sizing: border-box;
  width: 5px;
  height: 5px;
  border: 1px solid #aaa;
  background: #fff;
  font-size: 4px;
  font-weight: normal;
  font-style: normal;
  line-height: 3px;
  text-align: center;
}

.state {
  flex: none;
  display: flex;
  justify-content: flex-end;
  width: 7px;
  height: 5px;
  background: linear-gradient(#c8c8c8, #c8c8c8) 0 2px / 4px 1px no-repeat;
}

.node-text {
  padding: 0 1px;
}

.node-text.selected {
  background: #ececf0;
}

/* details */
.details {
  height: 145px;
  background: #fff;
}

.details table {
  width: 100%;
  height: 53px;
  table-layout: fixed;
  border-collapse: collapse;
}

.details th,
.details td {
  padding: 0 1px;
  border: 1px solid #d4d4d8;
  font-weight: normal;
  text-align: left;
}

.c-gutter {
  width: 2px;
}

.c-name {
  width: 40px;
}

.details .gutter {
  padding: 0;
  background: #eeeef2;
  border-width: 0 1px 0 0;
}

.details .section th {
  font-weight: bold;
  color: #111;
}

.details .picked th {
  background: #0078d7;
  color: #fff;
}

.details .picked td {
  padding: 0;
}

.details .picked button {
  display: block;
  width: 100%;
  height: 6px;
  background: #ececec;
  border-right: 1px solid #888;
  border-bottom: 1px solid #999;
  line-height: 5px;
}

.details .shade td:last-child {
  background: #e8e6e0;
}

/* graphics toolbar */
.right {
  display: flex;
  flex-direction: column;
  min-width: 0;
  min-height: 0;
}

.toolbar {
  display: flex;
  align-items: center;
  height: 11px;
  padding-left: 39px;
}

.grip {
  width: 2px;
  height: 7px;
  margin-right: 3px;
  background: radial-gradient(circle, #aaa 35%, transparent 40%) 0 0 / 2px 2px;
}

.sep {
  width: 1px;
  height: 7px;
  margin: 0 1px;
  background: #d4d4d8;
}

.tool {
  flex: none;
  display: flex;
  align-items: center;
  justify-content: center;
  gap: 1px;
  width: 9px;
  height: 9px;
}

.tool.on {
  width: 10px;
  border: 1px solid #7ab4ee;
  background: #d6e8fa;
}

.tool.t17 {
  width: 17px;
}

.tool.t24 {
  width: 24px;
}

.tool.t30 {
  width: 30px;
}

.tool.t37 {
  width: 37px;
}

/* viewport */
.viewport {
  position: relative;
  flex: 1;
  min-height: 0;
  overflow: hidden;
  background: linear-gradient(#6688de, #b0c2ef 48%, #fff 98%);
}

.scene {
  display: block;
  width: 100%;
  height: 100%;
}

.caption {
  position: absolute;
  left: 6px;
  top: 6px;
  display: grid;
  gap: 1px;
  color: #000;
}

.brand {
  position: absolute;
  right: 10px;
  top: 10px;
  display: grid;
  justify-items: end;
  color: #fff;
  font-family: "Open Sans", sans-serif;
  font-size: 7px;
  line-height: 8px;
}

.brand strong {
  font-size: 10px;
  line-height: 11px;
}

.edge {
  fill: none;
  stroke: #b4b4b4;
  stroke-width: 0.7;
}

.ruler {
  fill: #111;
}

/* messages */
.messages {
  height: 92px;
  background: #a0a0a0;
}

.messages .panel-head {
  background: #eeeef2;
  padding-left: 2px;
}

.messages table {
  width: 435px;
  table-layout: fixed;
  border-collapse: collapse;
  background: #fff;
  font-family: Lato, sans-serif;
}

.messages th,
.messages td {
  height: 6px;
  padding: 0 1px;
  line-height: 5px;
  font-weight: normal;
  text-align: left;
  overflow: hidden;
  border-right: 1px solid #d0d0d0;
  border-bottom: 1px solid #d0d0d0;
  color: #111;
}

.messages th,
.messages .kind {
  background: #f0f0f0;
}

.c-kind {
  width: 18px;
}

.c-text {
  width: 192px;
}

.c-assoc {
  width: 124px;
}

/* status bar */
.status {
  display: flex;
  align-items: center;
  gap: 5px;
  height: 8px;
  padding-right: 3px;
  background: #007acc;
  border-bottom: 1px solid #1d4f80;
  color: #fff;
}

.ready {
  margin-right: auto;
}

.msg,
.units {
  display: flex;
  align-items: center;
  gap: 1px;
}

.units {
  margin-left: 4px;
  gap: 2px;
}

.caret.up {
  border-width: 0 2px 2px;
  border-color: transparent transparent #fff;
}
</style>
